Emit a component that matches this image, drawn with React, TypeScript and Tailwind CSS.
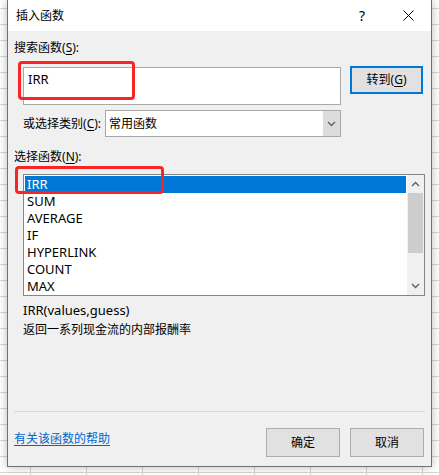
import React from 'react'

const items = ['IRR', 'SUM', 'AVERAGE', 'IF', 'HYPERLINK', 'COUNT', 'MAX']

const Caret = ({ down = false }: { down?: boolean }) => (
  <svg width="9" height="6" viewBox="0 0 9 6" className={down ? 'rotate-180' : ''}>
    <path d="M1 5L4.5 1.5L8 5" fill="none" stroke="#606060" strokeWidth="1.4" />
  </svg>
)

const Key = ({ k }: { k: string }) => (
  <>
    (<span className="underline underline-offset-2">{k}</span>)
  </>
)

export default function App() {
  return (
    <div className="relative h-[475px] w-[439px] overflow-hidden bg-white bg-[linear-gradient(to_bottom,#d6d6d6_1px,transparent_1px),linear-gradient(to_right,#d6d6d6_1px,transparent_1px)] bg-[size:56px_16px] bg-[position:30px_8px] font-['Segoe_UI','Noto_Sans','Noto_Sans_CJK_SC',sans-serif] text-[12px] leading-[16px] text-black">
      <div className="ml-[7px] flex h-[467px] w-[425px] flex-col border border-t-0 border-[#707070] bg-[#f0f0f0] shadow-[0_0_9px_rgba(0,0,0,0.28)]">
        {/* title bar */}
        <div className="flex h-[31px] items-center bg-white">
          <span className="pl-[8px]">插入函数</span>
          <div className="ml-auto flex h-full">
            <div className="flex w-[46px] items-center justify-center text-[14px]">?</div>
            <div className="flex w-[46px] items-center justify-center">
              <svg width="11" height="11" viewBox="0 0 11 11">
                <path d="M0.5 0.5L10.5 10.5M10.5 0.5L0.5 10.5" stroke="#000" strokeWidth="1" />
              </svg>
            </div>
          </div>
        </div>

        <div className="flex flex-col pl-[6px] pt-[9px]">
          <div className="h-[16px]">
            搜索函数<Key k="S" />:
          </div>

          <div className="mt-[10px] flex items-start">
            <div className="ml-[9px] mt-[1px] h-[38px] w-[318px] border border-[#a8a8a8] bg-white px-[4px] pt-[3px] text-[13px]">
              IRR
            </div>
            <div className="ml-[9px] flex h-[28px] w-[73px] items-center justify-center border-2 border-[#0078d7] bg-[#e1e1e1]">
              转到<Key k="G" />
            </div>
          </div>

          <div className="mt-[5px] flex h-[27px] items-center">
            <div className="ml-[9px] w-[82px]">
              或选择类别<Key k="C" />:
            </div>
            <div className="flex h-[27px] w-[236px] border border-[#a8a8a8] bg-white">
              <div className="flex flex-1 items-center pl-[3px]">常用函数</div>
              <div className="flex w-[17px] items-center justify-center bg-[#dcdcdc]">
                <Caret down />
              </div>
            </div>
          </div>

          <div className="mt-[12px] h-[16px]">
            选择函数<Key k="N" />:
          </div>

          <div className="ml-[9px] mt-[9px] flex h-[122px] w-[402px] border border-[#82868f] bg-white">
            <div className="flex flex-1 flex-col p-[1px] text-[13px]">
              {items.map((it, i) => (
                <div
                  key={it}
                  className={
                    i === 0
                      ? 'flex h-[17px] items-center bg-[#0078d7] pl-[2px] text-white'
                      : 'flex h-[17px] items-center pl-[2px]'
                  }
                >
                  {it}
                </div>
              ))}
            </div>
            <div className="flex w-[17px] flex-col bg-[#f0f0f0]">
              <div className="flex h-[18px] items-center justify-center">
                <Caret />
              </div>
              <div className="mx-[1px] h-[60px] bg-[#cdcdcd]" />
              <div className="flex-1" />
              <div className="flex h-[18px] items-center justify-center">
                <Caret down />
              </div>
            </div>
          </div>

          <div className="ml-[9px] mt-[6px] h-[16px] text-[13px]">IRR(values,guess)</div>
          <div className="ml-[9px] mt-[4px] h-[16px]">返回一系列现金流的内部报酬率</div>

          <div className="mt-[73px] h-px w-[411px] bg-[#dadada]" />

          <div className="mt-[16px] flex w-[410px] items-start">
            <span className="mt-[3px] text-[#0066cc] underline underline-offset-2">有关该函数的帮助</span>
            <div className="ml-auto flex gap-[10px]">
              <div className="flex h-[29px] w-[74px] items-center justify-center border border-[#adadad] bg-[#e1e1e1]">
                确定
              </div>
              <div className="flex h-[29px] w-[74px] items-center justify-center border border-[#adadad] bg-[#e1e1e1]">
                取消
              </div>
            </div>
          </div>
        </div>
      </div>

      {/* red annotation boxes */}
      <div className="absolute left-[18px] top-[61px] h-[39px] w-[117px] rounded-[4px] border-[3px] border-[#fb2424]" />
      <div className="absolute left-[15px] top-[166px] h-[28px] w-[149px] rounded-[4px] border-[3px] border-[#fb2424]" />
    </div>
  )
}
